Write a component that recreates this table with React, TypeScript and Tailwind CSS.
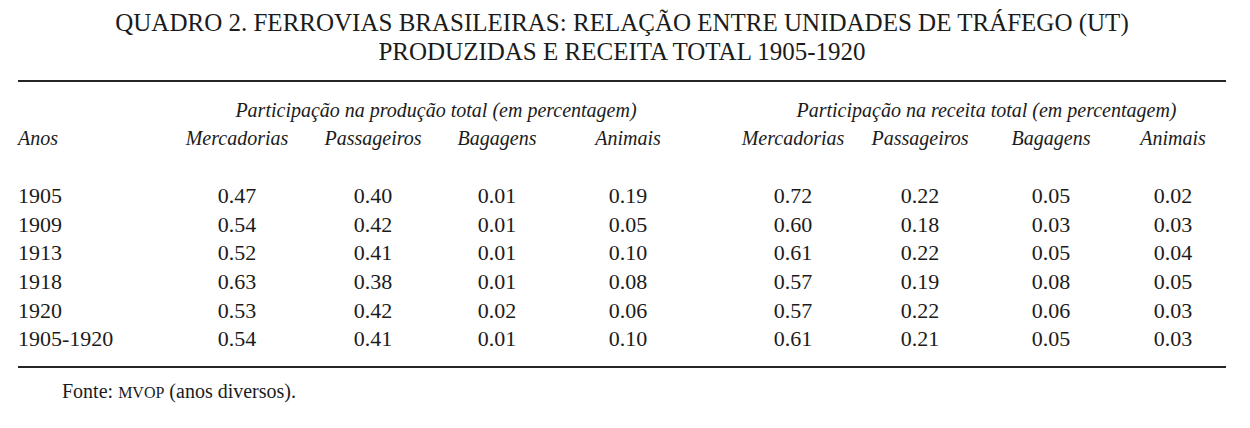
const rows: [string, string[]][] = [
  ["1905", ["0.47", "0.40", "0.01", "0.19", "0.72", "0.22", "0.05", "0.02"]],
  ["1909", ["0.54", "0.42", "0.01", "0.05", "0.60", "0.18", "0.03", "0.03"]],
  ["1913", ["0.52", "0.41", "0.01", "0.10", "0.61", "0.22", "0.05", "0.04"]],
  ["1918", ["0.63", "0.38", "0.01", "0.08", "0.57", "0.19", "0.08", "0.05"]],
  ["1920", ["0.53", "0.42", "0.02", "0.06", "0.57", "0.22", "0.06", "0.03"]],
  ["1905-1920", ["0.54", "0.41", "0.01", "0.10", "0.61", "0.21", "0.05", "0.03"]],
]

const cols = ["Mercadorias", "Passageiros", "Bagagens", "Animais", "Mercadorias", "Passageiros", "Bagagens", "Animais"]

// column boundaries put the centres where the printed table has them
const grid = "grid grid-cols-[151px_136px_136px_112px_150px_180px_74px_188px_56px]"

export default function App() {
  return (
    <div className="w-[1250px] h-[428px] bg-white text-[#1b1b1b] font-['Liberation_Serif',serif] pl-[18px] pr-[24px] pt-[7.5px]">
      <div className="text-center text-[25px] leading-[29px]">
        <div>QUADRO 2. FERROVIAS BRASILEIRAS: RELAÇÃO ENTRE UNIDADES DE TRÁFEGO (UT)</div>
        <div>PRODUZIDAS E RECEITA TOTAL 1905-1920</div>
      </div>

      <div className="mt-[14px] h-[2px] bg-[#262626]" />

      <div className={`${grid} mt-[14.75px] italic text-[20px] leading-[28px]`}>
        <div />
        <div className="col-span-4 flex justify-center">Participação na produção total (em percentagem)</div>
        <div className="col-span-4 flex justify-center pl-[69px]">Participação na receita total (em percentagem)</div>
      </div>
      <div className={`${grid} italic text-[20px] leading-[28px]`}>
        <div>Anos</div>
        {cols.map((c, i) => (
          <div key={i} className="flex justify-center whitespace-nowrap">{c}</div>
        ))}
      </div>

      <div className="mt-[30px] text-[22px] leading-[28.6px]">
        {rows.map(([year, vals]) => (
          <div key={year} className={grid}>
            <div>{year}</div>
            {vals.map((v, i) => (
              <div key={i} className="flex justify-center">{v}</div>
            ))}
          </div>
        ))}
      </div>

      <div className="mt-[12.5px] h-[2px] bg-[#262626]" />

      <p className="mt-[9px] pl-[44px] text-[20px] leading-[28px]">
        Fonte: <span className="text-[16px]">MVOP</span> (anos diversos).
      </p>
    </div>
  )
}
